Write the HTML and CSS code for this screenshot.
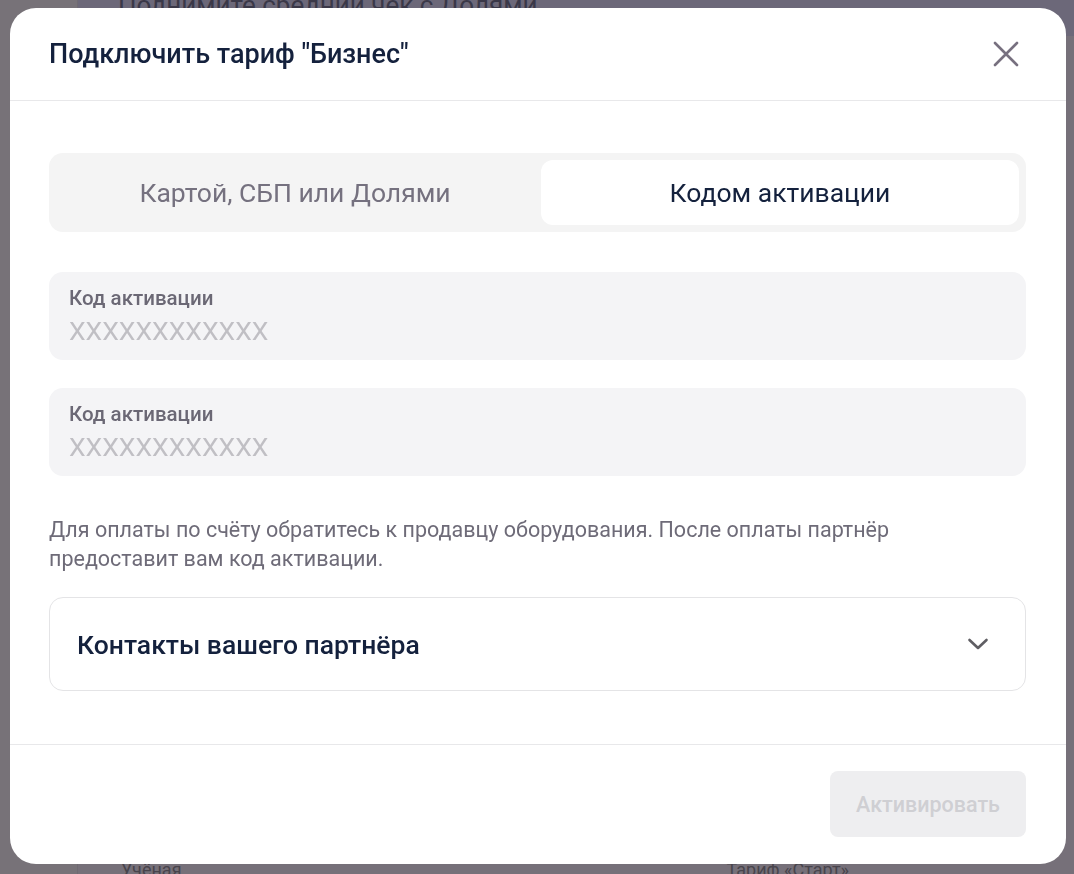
FILE: index.html
```html
<!DOCTYPE html>
<html lang="ru">
<head>
  <meta charset="UTF-8">
  <title>Подключить тариф "Бизнес"</title>
  <meta name="viewport" content="width=device-width, initial-scale=1.0">
  <link rel="stylesheet" href="styles.css">
</head>
<body>

<div class="page">
  <aside class="sidebar"></aside>
  <main class="main">
    <div class="promo">Поднимите средний чек с Долями</div>
    <div class="side-strip"></div>
    <div class="tariff-row">
      <span>Учёная</span>
      <span class="tariff-name">Тариф «Старт»</span>
    </div>
  </main>
</div>

<div class="overlay">
  <div class="modal" role="dialog" aria-labelledby="modalTitle">
    <div class="modal-header">
      <h2 id="modalTitle">Подключить тариф "Бизнес"</h2>
      <button class="btn-close" aria-label="Закрыть">
        <svg width="26" height="26" viewBox="0 0 26 26" fill="none">
          <path d="M2 2L24 24M24 2L2 24" stroke="#77707f" stroke-width="2.6" stroke-linecap="round"/>
        </svg>
      </button>
    </div>

    <div class="modal-body">
      <div class="tabs">
        <button class="tab">Картой, СБП или Долями</button>
        <button class="tab active">Кодом активации</button>
      </div>

      <label class="field">
        <span class="field-label">Код активации</span>
        <input type="text" placeholder="XXXXXXXXXXXX">
      </label>

      <label class="field">
        <span class="field-label">Код активации</span>
        <input type="text" placeholder="XXXXXXXXXXXX">
      </label>

      <p class="hint">Для оплаты по счёту обратитесь к продавцу оборудования. После оплаты партнёр предоставит вам код активации.</p>

      <div class="accordion">
        <span>Контакты вашего партнёра</span>
        <svg width="22" height="14" viewBox="0 0 22 14" fill="none">
          <path d="M2.5 3L11 11L19.5 3" stroke="#5f5e63" stroke-width="2.6" stroke-linecap="round" stroke-linejoin="round"/>
        </svg>
      </div>
    </div>

    <div class="modal-footer">
      <button class="btn-activate" disabled>Активировать</button>
    </div>
  </div>
</div>

</body>
</html>
```

FILE: styles.css
```css
body {
  margin: 0;
  height: 100vh;
  overflow: hidden;
  font-family: 'Roboto', sans-serif;
  background: #767079;
}

.page {
  display: flex;
  height: 100vh;
}

.sidebar {
  width: 77px;
  background: #777278;
  border-right: 1px solid #6f6a72;
}

.main {
  flex: 1;
  display: flex;
  flex-direction: column;
  background: #767079;
}

.promo {
  height: 36px;
  background: #6c6879;
  padding-left: 40px;
  font-size: 26px;
  line-height: 10px;
  color: #3a3848;
  overflow: hidden;
}

.side-strip {
  flex: 1;
}

.tariff-row {
  display: flex;
  padding: 0 0 4px 43px;
  font-size: 18px;
  color: #48444c;
  height: 10px;
  line-height: 20px;
  margin-top: -8px;
}

.tariff-name {
  margin-left: 545px;
}

.overlay {
  position: fixed;
  inset: 0;
  display: flex;
  align-items: flex-start;
  justify-content: flex-start;
  padding: 8px 0 0 10px;
}

.modal {
  width: 1056px;
  height: 856px;
  background: #fff;
  border-radius: 26px;
  display: flex;
  flex-direction: column;
  overflow: hidden;
}

.modal-header {
  display: flex;
  align-items: center;
  justify-content: space-between;
  height: 92px;
  padding: 0 47px 0 39px;
  border-bottom: 1px solid #e8e8ea;
}

.modal-header h2 {
  margin: 0;
  font-size: 27px;
  font-weight: 500;
  color: #14213d;
}

.btn-close {
  border: none;
  background: none;
  padding: 0;
  display: flex;
  cursor: pointer;
}

.modal-body {
  flex: 1;
  padding: 52px 40px 0 39px;
}

.tabs {
  display: flex;
  gap: 7px;
  padding: 7px;
  background: #f4f4f4;
  border-radius: 14px;
  margin-bottom: 40px;
}

.tab {
  flex: 1;
  height: 65px;
  border: none;
  border-radius: 12px;
  background: transparent;
  font-family: 'Roboto', sans-serif;
  font-size: 26.5px;
  color: #75717f;
  cursor: pointer;
}

.tab.active {
  background: #fff;
  color: #14213d;
}

.field {
  display: flex;
  flex-direction: column;
  height: 88px;
  box-sizing: border-box;
  padding: 15px 20px 0;
  background: #f4f4f6;
  border-radius: 14px;
  margin-bottom: 28px;
}

.field-label {
  font-size: 20.5px;
  font-weight: 500;
  color: #6b6875;
  line-height: 22px;
}

.field input {
  border: none;
  background: transparent;
  padding: 0;
  margin-top: 6px;
  font-family: 'Roboto', sans-serif;
  font-size: 26.5px;
  color: #14213d;
  outline: none;
}

.field input::placeholder {
  color: #c0bfc4;
}

.hint {
  margin: 39px 0 24px;
  max-width: 900px;
  font-size: 21.5px;
  line-height: 29px;
  color: #6e6b78;
}

.accordion {
  display: flex;
  align-items: center;
  justify-content: space-between;
  height: 94px;
  box-sizing: border-box;
  padding: 0 36px 0 27px;
  border: 1px solid #e4e4e6;
  border-radius: 14px;
  font-size: 26.5px;
  font-weight: 500;
  color: #14213d;
}

.modal-footer {
  display: flex;
  justify-content: flex-end;
  padding: 26px 40px 27px;
  border-top: 1px solid #e8e8ea;
}

.btn-activate {
  width: 196px;
  height: 66px;
  border: none;
  border-radius: 8px;
  background: #eeeef0;
  font-family: 'Roboto', sans-serif;
  font-size: 21.5px;
  font-weight: 500;
  color: #cfcfd3;
}
```
